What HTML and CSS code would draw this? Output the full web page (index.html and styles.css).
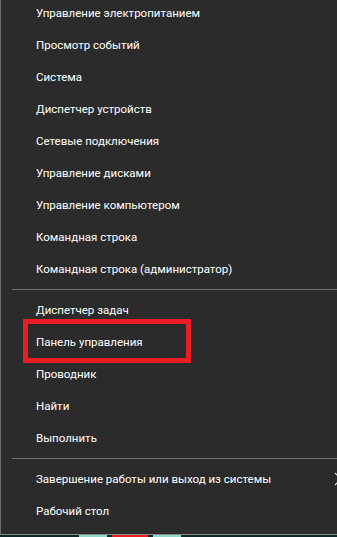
FILE: index.html
```html
<!DOCTYPE html>
<html lang="ru">
<head>
<meta charset="utf-8">
<link rel="stylesheet" href="styles.css">
</head>
<body>
<div class="menu">
  <ul class="group">
    <li class="item">Управление электропитанием</li>
    <li class="item">Просмотр событий</li>
    <li class="item">Система</li>
    <li class="item">Диспетчер устройств</li>
    <li class="item">Сетевые подключения</li>
    <li class="item">Управление дисками</li>
    <li class="item">Управление компьютером</li>
    <li class="item">Командная строка</li>
    <li class="item">Командная строка (администратор)</li>
  </ul>
  <div class="sep"></div>
  <ul class="group">
    <li class="item">Диспетчер задач</li>
    <li class="item highlighted"><span class="mark"></span>Панель управления</li>
    <li class="item">Проводник</li>
    <li class="item">Найти</li>
    <li class="item">Выполнить</li>
  </ul>
  <div class="sep"></div>
  <ul class="group">
    <li class="item sub"><span>Завершение работы или выход из системы</span>
      <svg class="chev" width="8" height="14" viewBox="0 0 8 14"><path d="M1 1 L7 7 L1 13" fill="none" stroke="#e0e0e0" stroke-width="1.2"/></svg>
    </li>
    <li class="item">Рабочий стол</li>
  </ul>
</div>
<div class="taskbar">
  <span class="seg cyan s1"></span>
  <span class="seg red s2"></span>
  <span class="seg cyan s3"></span>
</div>
</body>
</html>
```
FILE: styles.css
```css
html, body {
  margin: 0;
  padding: 0;
  width: 337px;
  height: 537px;
  overflow: hidden;
  background: #0d2826;
}
.menu {
  width: 350px;
  height: 535px;
  box-sizing: border-box;
  background: #2b2b2b;
  border-left: 1px solid #707070;
  border-bottom: 1px solid #8a8a8a;
  overflow: hidden;
  font-family: Roboto, "Noto Sans", sans-serif;
  font-size: 11.5px;
  color: #ffffff;
}
.group {
  list-style: none;
  margin: 0;
  padding: 0;
}
.group:first-child {
  margin-top: -3px;
}
.item {
  position: relative;
  height: 32px;
  display: flex;
  align-items: center;
  padding-left: 35px;
  padding-right: 8px;
  white-space: nowrap;
}
.sub {
  justify-content: space-between;
}
.chev {
  display: block;
}
.sep {
  height: 1px;
  margin: 4px 0 4px 11px;
  background: #6e6e6e;
}
.mark {
  position: absolute;
  left: 22px;
  top: -7px;
  width: 168px;
  height: 44px;
  box-sizing: border-box;
  border: 5px solid #ec1c24;
}
.taskbar {
  display: flex;
  height: 2px;
}
.seg {
  display: block;
  height: 2px;
}
.cyan { background: #8fd8cc; }
.red { background: #e81c1c; }
.s1 { margin-left: 79px; width: 28px; }
.s2 { margin-left: 5px; width: 36px; }
.s3 { margin-left: 5px; width: 28px; }
```
